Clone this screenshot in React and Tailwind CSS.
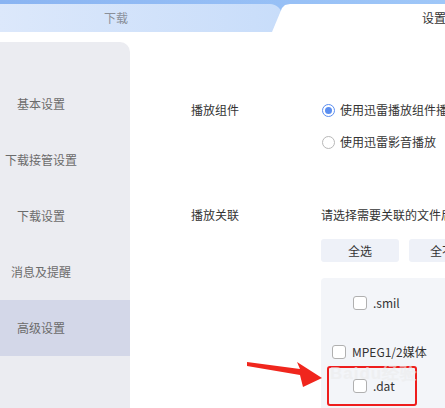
import React from "react";

function Radio({ checked }) {
  return checked ? (
    <span className="w-[13px] h-[13px] rounded-full border border-[#5b8ef0] bg-white flex items-center justify-center ml-[1px] mr-[5px] shrink-0">
      <span className="w-[7px] h-[7px] rounded-full bg-[#5b8ef0]" />
    </span>
  ) : (
    <span className="w-[13px] h-[13px] rounded-full border border-[#b8b8b8] bg-white ml-[1px] mr-[5px] shrink-0" />
  );
}

function Check() {
  return <span className="w-[14px] h-[14px] rounded-[3px] border border-[#b0b0b0] bg-white shrink-0 mr-[6px]" />;
}

export default function App() {
  const side = ["基本设置", "下载接管设置", "下载设置", "消息及提醒", "高级设置"];
  return (
    <div className="w-[445px] h-[408px] overflow-hidden bg-white relative text-[12px] text-[#333] [font-family:'Noto_Sans_CJK_SC','Noto_Sans',sans-serif]">
      {/* header tabs */}
      <div className="h-[32px] bg-gradient-to-r from-[#8ab4f2] to-[#9fc7f8] pt-[4px] flex">
        <div className="w-[282px] shrink-0 h-full rounded-tr-[12px] bg-gradient-to-r from-[#dce8fb] to-[#c8ddfa] flex items-center pl-[104px] text-[#8a8f99]">
          下载
        </div>
        <div className="flex-1 ml-[-10px] h-full bg-white flex items-center pl-[150px] whitespace-nowrap [clip-path:polygon(0_100%,10px_4px,13px_1px,18px_0,100%_0,100%_100%)]">
          设置
        </div>
      </div>

      <div className="flex mt-[10px] h-[366px]">
        {/* sidebar */}
        <div className="w-[130px] shrink-0 bg-[#ebecf1] rounded-tr-[10px] pt-[34px] text-[#6b6b6b]">
          {side.map((s, i) => (
            <div
              key={s}
              className={
                "h-[56px] flex items-center " + (i === 4 ? "bg-[#d3d7e8]" : "")
              }
            >
              <span className="w-[82px] text-center whitespace-nowrap">{s}</span>
            </div>
          ))}
        </div>

        {/* main */}
        <div className="flex-1 pl-[61px] pt-[58px] flex flex-col whitespace-nowrap">
          <div className="flex leading-[20px]">
            <div className="w-[130px] shrink-0">播放组件</div>
            <div className="flex flex-col gap-[12px]">
              <div className="flex items-center">
                <Radio checked />
                <span>使用迅雷播放组件播放</span>
              </div>
              <div className="flex items-center">
                <Radio />
                <span>使用迅雷影音播放</span>
              </div>
            </div>
          </div>

          <div className="flex leading-[20px] mt-[53px] flex-1">
            <div className="w-[130px] shrink-0">播放关联</div>
            <div className="flex flex-col flex-1">
              <div>请选择需要关联的文件后缀名</div>
              <div className="flex gap-[10px] mt-[14px]">
                <div className="w-[78px] h-[23px] rounded-[3px] bg-[#eef1f8] flex items-center justify-center">全选</div>
                <div className="w-[78px] h-[23px] rounded-[3px] bg-[#eef1f8] flex items-center justify-center">全不选</div>
              </div>
              <div className="mt-[16px] flex-1 w-[200px] bg-[#f3f5f9] rounded-t-[4px] pt-[15px] text-[#333]">
                <div className="flex items-center h-[20px] pl-[32px]">
                  <Check />
                  <span>.smil</span>
                </div>
                <div className="flex items-center h-[20px] pl-[11px] mt-[29px]">
                  <Check />
                  <span>MPEG1/2媒体</span>
                </div>
                <div className="flex items-center h-[20px] pl-[32px] mt-[14px]">
                  <Check />
                  <span>.dat</span>
                </div>
              </div>
            </div>
          </div>
        </div>
      </div>

      {/* annotation: red box */}
      <div className="absolute left-[327px] top-[366px] w-[90px] h-[40px] border-2 border-[#ee1d1d] rounded-[3px]" />
      {/* watermark */}
      <div className="absolute left-[330px] top-[361px] text-[17px] font-bold tracking-[1px] text-[#ececec] opacity-60 whitespace-nowrap [font-family:'Liberation_Sans',sans-serif]">
        Baidu经验
      </div>
      {/* annotation: arrow */}
      <svg className="absolute left-0 top-0" width="445" height="408" viewBox="0 0 445 408">
        <polygon
          points="247,362 300,369 297,362 322,378 303,387 300,375 247,366"
          fill="#f0261d"
        />
      </svg>
    </div>
  );
}
